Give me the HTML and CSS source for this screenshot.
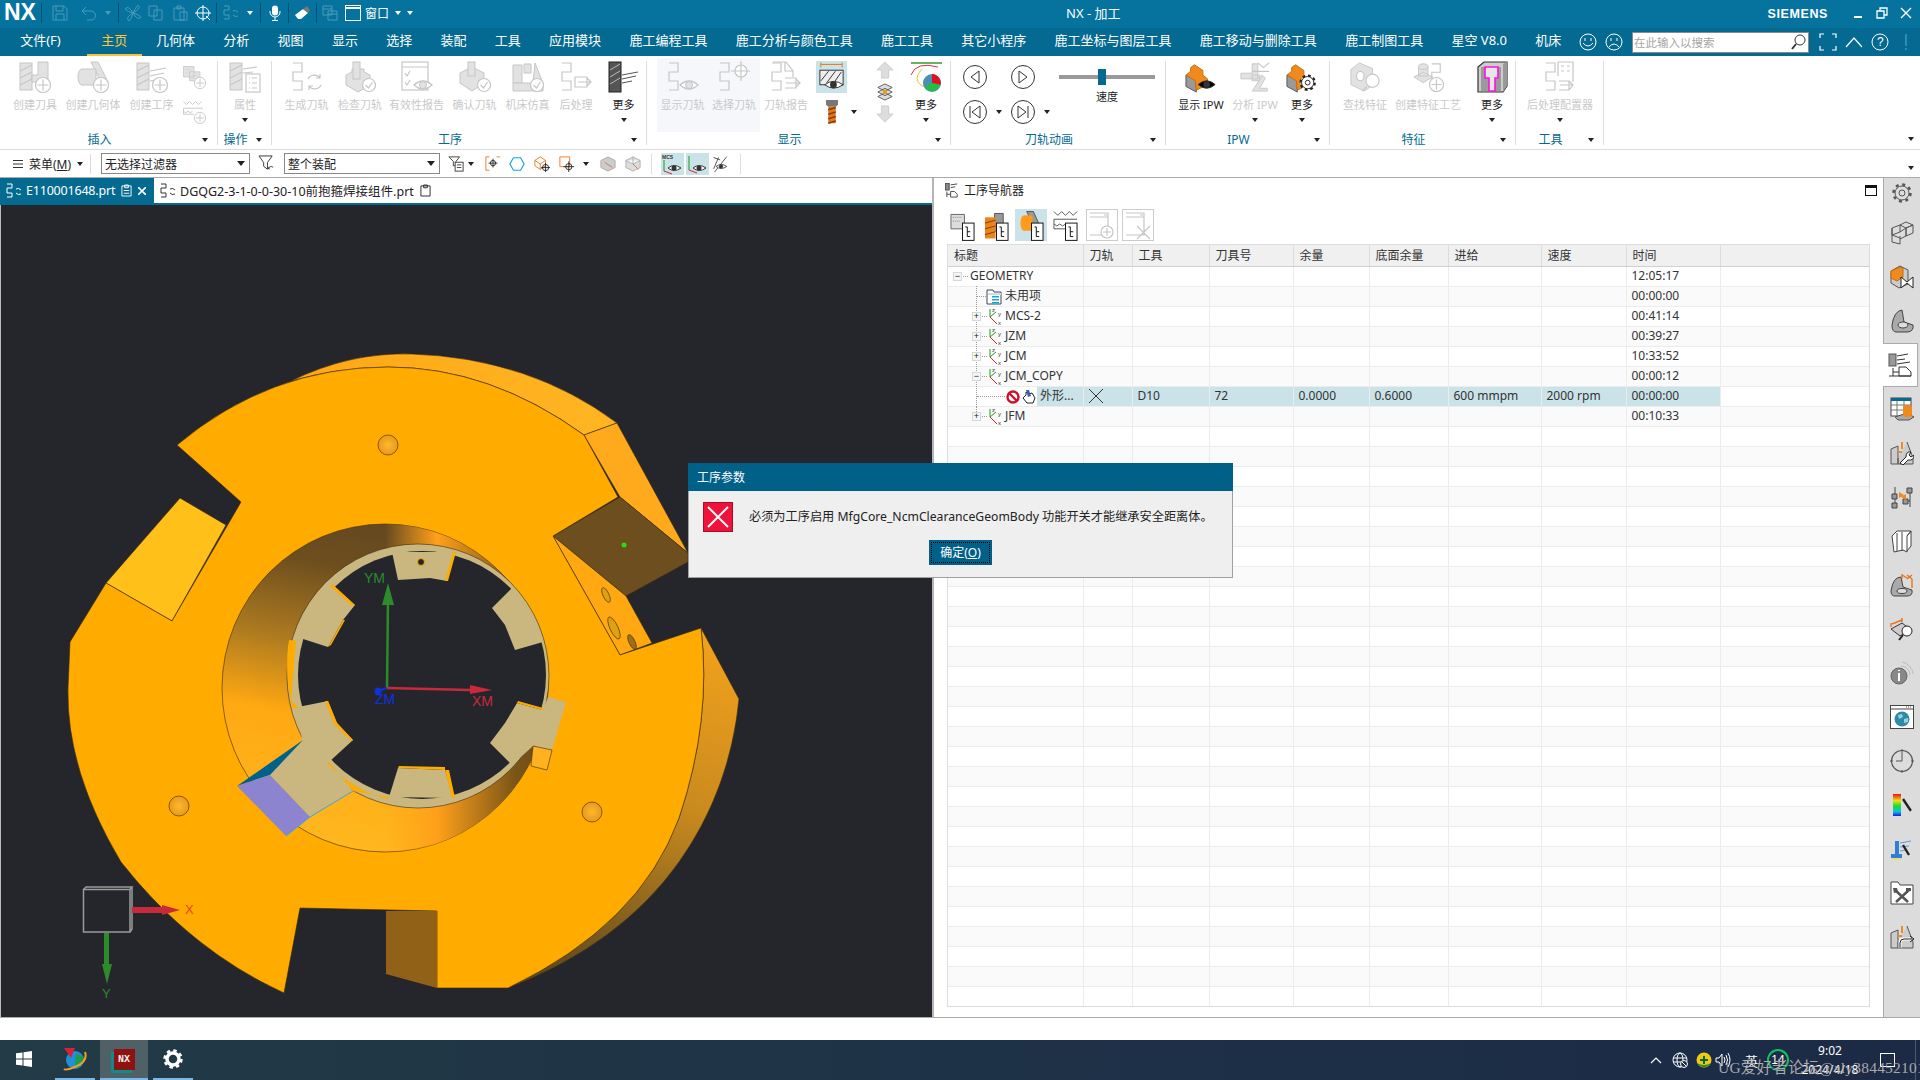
FILE: index.html
```html
<!DOCTYPE html>
<html lang="zh-CN">
<head>
<meta charset="utf-8">
<title>NX - 加工</title>
<link rel="stylesheet" href="styles.css">
</head>
<body>
<svg class="sprite" width="0" height="0" aria-hidden="true">
<defs>
<g id="pl"><circle class="gw" cx="24" cy="24" r="7.5"/><path class="gs" d="M24 18.5v11M18.5 24h11"/></g>
<g id="ck"><circle class="gw" cx="25" cy="24" r="6.5"/><path class="gs" d="M21.5 24l3 3 4-6"/></g>
<g id="ey"><path class="gw" d="M13 24q9-8 18 0q-9 8-18 0z"/><circle class="gf" cx="22" cy="24" r="3.5"/></g>
<g id="dey"><path class="dw" d="M12 24q9-8 18 0q-9 8-18 0z"/><circle fill="#333" cx="21" cy="24" r="3.5"/></g>
<path id="zz" d="M2 2h9v9H2v9h9v9H2" fill="none"/>
<g id="mill"><rect class="gf" x="1" y="2" width="12" height="27"/><path class="gs" d="M1 10l12-6M1 17l12-6M1 24l12-6"/></g>
<symbol id="a-tool" viewBox="0 0 32 32"><use href="#mill"/><path class="gf" d="M13 14h6V1h10v20H13z"/><use href="#pl"/></symbol>
<symbol id="a-geo" viewBox="0 0 32 32"><path class="gf" d="M14 1h7l10 20H24z"/><ellipse class="gf" cx="5" cy="16" rx="4" ry="8"/><path class="gf" d="M5 8h14v16H5"/><use href="#pl"/></symbol>
<symbol id="a-op" viewBox="0 0 32 32"><use href="#mill"/><path class="gs" d="M14 10l16-3M14 15l14-3M14 20l10-2"/><use href="#pl"/></symbol>
<symbol id="a-s1" viewBox="0 0 32 32"><path class="gf" d="M2 2h14v14H2zM10 9h14v12H10z"/><path class="gs" stroke-dasharray="1 2" d="M5 6h8M5 10h3M13 14h8M13 18h5"/><use href="#pl"/></symbol>
<symbol id="a-s2" viewBox="0 0 32 32"><path class="gs" d="M2 2l4 4 4-4 4 4 4-4 4 4 4-4M2 11h26M2 11v8M2 19h14"/><path class="gs" d="M2 15l3 2 3-2 3 2 3-2"/><use href="#pl"/></symbol>
<symbol id="a-attr" viewBox="0 0 32 32"><use href="#mill"/><path class="gs" d="M14 8l14-2M14 12l10-1"/><rect class="gw" x="17" y="13" width="14" height="18"/><path class="gs" d="M20 17h1M23 17h5M20 22h1M23 22h5M20 27h1M23 27h5"/></symbol>
<symbol id="a-gen" viewBox="0 0 32 32"><use href="#zz" class="gs"/><path class="gs" d="M17 18a7 7 0 0 1 12-1M30 24a7 7 0 0 1-12 1M29 13v4h-4M18 29v-4h4"/></symbol>
<symbol id="a-chk" viewBox="0 0 32 32"><path class="gf" d="M2 14l6-3v-3l12 0v3l6 3v10l-12 7-12-7z"/><rect class="gf" x="9" y="1" width="7" height="17"/><use href="#ck"/></symbol>
<symbol id="a-rep" viewBox="0 0 32 32"><rect class="gw" x="1" y="1" width="26" height="28"/><path class="gs" d="M1 6h26M4 12l2 3 3-5M4 21l2 3 3-5"/><use href="#ey"/></symbol>
<symbol id="a-cnf" viewBox="0 0 32 32"><path class="gf" d="M1 12l12-6 12 6v10l-12 8-12-8z"/><rect class="gf" x="9" y="1" width="7" height="14"/><use href="#ck"/></symbol>
<symbol id="a-mch" viewBox="0 0 32 32"><path class="gf" d="M1 4h9v18H1zM12 3h7v9h-7zM23 2l8 20H21z"/><path class="gf" d="M1 22h30v8H1z"/><use href="#ck"/></symbol>
<symbol id="a-post" viewBox="0 0 32 32"><use href="#zz" class="gs"/><path class="gs" d="M15 16h12v10H15zM18 21h13M27 17l4 4-4 4"/></symbol>
<symbol id="a-more" viewBox="0 0 32 32"><rect fill="#555" x="1" y="1" width="12" height="30" stroke="#222"/><path stroke="#bbb" fill="none" d="M2 9l10-6M2 16l10-6M2 23l10-6"/><path fill="none" stroke="#555" d="M14 14l16-3M14 18l14-3M14 22l10-2"/></symbol>
<symbol id="a-show" viewBox="0 0 32 32"><use href="#zz" class="gs"/><use href="#ey"/></symbol>
<symbol id="a-sel" viewBox="0 0 32 32"><use href="#zz" class="gs"/><circle class="gw" cx="23" cy="10" r="6"/><path class="gs" d="M23 0v20M13 10h19"/></symbol>
<symbol id="a-prep" viewBox="0 0 32 32"><use href="#zz" class="gs"/><path class="gs" d="M3 1h13l7 9v6M15 1v9h8M15 17h11v10H15M16 22h14M26 18l4 4-4 4"/></symbol>
<symbol id="a-tog" viewBox="0 0 32 32"><path fill="none" stroke="#e8731a" d="M5 3h22M5 1v5M27 1v5"/><rect x="4" y="9" width="24" height="15" fill="#eee" stroke="#333"/><path stroke="#333" d="M5 20l8-10M11 22l9-12M17 24l9-13"/><path fill="#fff" stroke="#333" d="M9 24q9-7 19 0q-10 7-19 0z"/><circle fill="#333" cx="18" cy="24" r="3.5"/></symbol>
<symbol id="a-mil2" viewBox="0 0 32 32"><path fill="#777" d="M8 0h16v6l-3 3H11L8 6z"/><rect x="11" y="9" width="10" height="22" fill="#e0771c"/><path stroke="#8a3c05" stroke-width="2" d="M11 13l10-3M11 19l10-3M11 25l10-3M11 31l10-3"/></symbol>
<symbol id="a-up" viewBox="0 0 20 20"><path fill="#ddd" stroke="#ccc" d="M10 1l9 9h-5v9H6v-9H1z"/></symbol>
<symbol id="a-dn" viewBox="0 0 20 20"><path fill="#ddd" stroke="#ccc" d="M10 19l9-9h-5V1H6v9H1z"/></symbol>
<symbol id="a-lay" viewBox="0 0 20 20"><path fill="#ddd" stroke="#555" d="M2 5l8-4 8 4-8 4zM2 10l8-4 8 4-8 4zM2 15l8-4 8 4-8 4z"/><circle cx="10" cy="10" r="2.5" fill="#e8a21a"/></symbol>
<symbol id="a-pie" viewBox="0 0 32 32"><path stroke="#1a9a1a" stroke-width="1.4" d="M1 2h31"/><path fill="none" stroke="#e03040" d="M1 14q5-14 27-8"/><path fill="none" stroke="#f0c020" d="M12 8q-10 10 0 17h7"/><circle cx="22" cy="22" r="9" fill="#4a90b0"/><path fill="#e01020" d="M22 22V13a9 9 0 0 1 8.500 11z"/><path fill="#20c040" d="M22 22l8.500 2a9 9 0 0 1-16 2z"/></symbol>
<symbol id="a-prev" viewBox="0 0 24 24"><ellipse cx="12" cy="12" rx="11.500" ry="11.500" fill="none" stroke="#333"/><path fill="none" stroke="#333" d="M16 6v12l-8-6z"/></symbol>
<symbol id="a-next" viewBox="0 0 24 24"><ellipse cx="12" cy="12" rx="11.500" ry="11.500" fill="none" stroke="#333"/><path fill="none" stroke="#333" d="M8 6v12l8-6z"/></symbol>
<symbol id="a-first" viewBox="0 0 24 24"><ellipse cx="12" cy="12" rx="11.500" ry="11.500" fill="none" stroke="#333"/><path fill="none" stroke="#333" d="M17 6v12l-8-6zM7 6v12"/></symbol>
<symbol id="a-last" viewBox="0 0 24 24"><ellipse cx="12" cy="12" rx="11.500" ry="11.500" fill="none" stroke="#333"/><path fill="none" stroke="#333" d="M7 6v12l8-6zM17 6v12"/></symbol>
<g id="stairs"><path fill="#9a9a9a" stroke="#555" d="M1 14v12l11 6V18z"/><path fill="#f08a1d" stroke="#c66a10" d="M1 14l5-4V6l4-3 9 6v5l5 4v6l-12 6-1-10z"/></g>
<symbol id="a-ipw" viewBox="0 0 34 32"><use href="#stairs"/><use href="#dey" x="2"/></symbol>
<symbol id="a-ana" viewBox="0 0 34 32"><path class="gf" d="M2 12h12V2h6v16H2zM14 14h8v6H14z"/><path class="gs" d="M20 1l6 5 6-5M14 10h18"/><path class="gf" d="M24 14l4 3-6 11h8v3H14l8-12z"/></symbol>
<symbol id="a-igr" viewBox="0 0 34 32"><use href="#stairs"/><circle cx="23" cy="22" r="7.500" fill="#fff" stroke="#222" stroke-width="2.500" stroke-dasharray="3 2.900"/><circle cx="23" cy="22" r="6.500" fill="#fff" stroke="#222"/><circle cx="23" cy="22" r="2.500" fill="#fff" stroke="#222"/></symbol>
<symbol id="a-find" viewBox="0 0 34 32"><path class="gf" d="M2 8l9-7 14 6v18l-9 6-14-7z"/><ellipse class="gw" cx="12" cy="15" rx="4" ry="5"/><circle class="gw" cx="25" cy="20" r="7"/><path class="gs" d="M19 26l-5 5" stroke-width="2"/></symbol>
<symbol id="a-cft" viewBox="0 0 34 32"><path class="gf" d="M2 16l10-5 10 5-10 6zM7 5h10v10H7z"/><ellipse class="gf" cx="12" cy="5" rx="5" ry="3"/><use href="#zz" class="gs" x="19"/><use href="#pl" x="2"/></symbol>
<symbol id="a-mag" viewBox="0 0 32 32"><path fill="#ccc" stroke="#333" stroke-width="1.200" d="M2 6l6-5h23v24l-4 6H2z"/><path fill="#999" d="M27 3l4-2v24l-4 6z"/><rect x="5" y="6" width="20" height="24" fill="#9a9a9a"/><path fill="#e6e6e6" stroke="#ff10e0" stroke-width="1.600" d="M9 6h13v11h-3v13h-6V17H9z"/></symbol>
<symbol id="a-cfg" viewBox="0 0 32 32"><use href="#zz" class="gs"/><path class="gs" d="M14 1h15v20M14 1v14M17 5h3M23 5h3M17 10h3M23 10h3M15 20h10v9H15M16 24h13M25 20l4 4-4 5"/></symbol>
<symbol id="q-save" viewBox="0 0 16 16"><path class="qs" d="M1 1h11l3 3v11H1zM4 1v5h7V1M4 15V9h8v6"/></symbol>
<symbol id="q-undo" viewBox="0 0 16 16"><path class="qs" d="M5 2L1 6l4 4M1 6h9a4 4 0 0 1 0 9H6"/></symbol>
<symbol id="q-fan" viewBox="0 0 16 16"><path class="qs" d="M8 8Q4 1 1 3t7 5zM8 8q7-4 6-7T8 8zM8 8q4 7 7 5T8 8zM8 8Q1 12 3 15t5-7z"/></symbol>
<symbol id="q-copy" viewBox="0 0 16 16"><path class="qs" d="M1 1h8v10H1zM6 5h8v10H6z"/></symbol>
<symbol id="q-paste" viewBox="0 0 16 16"><path class="qs" d="M2 3h10v12H2zM5 1h4v3H5zM8 7h7v8H8z"/></symbol>
<symbol id="q-tgt" viewBox="0 0 16 16"><circle cx="8" cy="8" r="6" fill="none" stroke="#fff"/><path fill="none" stroke="#fff" d="M8 0v16M0 8h16M11 11l4 4"/></symbol>
<symbol id="q-zz" viewBox="0 0 16 16"><path class="qs" d="M1 1h5v4H1v5h5v4H1M10 6a4 4 0 0 1 5 1M15 11a4 4 0 0 1-5-1"/></symbol>
<symbol id="q-mic" viewBox="0 0 16 16"><rect x="5" y="0.500" width="6" height="10" rx="3" fill="#fff"/><path fill="none" stroke="#fff" d="M3 6v1a5 5 0 0 0 10 0V6M8 12v3M5 15.500h6"/></symbol>
<symbol id="q-era" viewBox="0 0 16 16"><path fill="#fff" d="M1 10l8-6 5 4-7 6H4z"/><path fill="#777" d="M9 4l4-3 3 4-2 3z"/></symbol>
<symbol id="q-win2" viewBox="0 0 16 16"><path class="qs" d="M1 1h9v9H1zM1 4h9M6 6h9v9H6zM6 9h9"/></symbol>
<symbol id="q-win" viewBox="0 0 16 16"><rect x="0.500" y="0.500" width="15" height="15" fill="none" stroke="#fff"/><path stroke="#fff" stroke-width="2" d="M0 3h16"/></symbol>
<symbol id="t-filt" viewBox="0 0 18 18"><path fill="#fff" stroke="#333" d="M1 1h14l-5 7v7l-4-3V8z"/><path fill="none" stroke="#333" d="M11 15a3 3 0 0 1 5-2M12 15l-1-2"/></symbol>
<symbol id="t-fl2" viewBox="0 0 18 18"><path fill="#fff" stroke="#333" d="M1 1h12l-4 5v5H6V6z"/><rect x="8" y="7" width="9" height="10" fill="#fff" stroke="#333"/><path stroke="#333" d="M10 10h5M10 13h5"/></symbol>
<symbol id="t-sel" viewBox="0 0 18 18"><path fill="none" stroke="#e8731a" d="M5 1H1v15h4M13 1h4"/><circle cx="9" cy="8" r="3" fill="none" stroke="#222"/><path stroke="#222" d="M9 3v10M4 8h10"/></symbol>
<symbol id="t-hex" viewBox="0 0 18 18"><path fill="none" stroke="#12a5d8" stroke-width="1.300" d="M5 2h8l4 7-4 7H5L1 9z"/></symbol>
<symbol id="t-cube" viewBox="0 0 18 18"><path fill="none" stroke="#e8731a" d="M1 5l6-4 6 4v6l-6 4-6-4zM1 5l6 4 6-4M7 9v6"/><circle cx="13" cy="13" r="3.500" fill="none" stroke="#222"/><path stroke="#222" d="M13 8v10M8 13h10"/></symbol>
<symbol id="t-box" viewBox="0 0 18 18"><path fill="none" stroke="#e8731a" d="M1 1h11v11H1z"/><circle cx="11" cy="12" r="3.500" fill="none" stroke="#222"/><path stroke="#222" d="M11 6v12M5 12h12"/></symbol>
<symbol id="t-gc1" viewBox="0 0 18 18"><path fill="#ccc" stroke="#aaa" d="M1 5l8-4 8 4v8l-8 4-8-4z"/><path stroke="#c9764a" d="M5 7l9 6"/></symbol>
<symbol id="t-gc2" viewBox="0 0 18 18"><path fill="#ddd" stroke="#aaa" d="M1 5l8-4 8 4v8l-8 4-8-4zM9 9V1M1 5l8 4 8-4"/><path stroke="#c9764a" d="M9 9l6 6"/></symbol>
<symbol id="t-mcs" viewBox="0 0 22 22"><text x="1" y="6" class="micro">MCS</text><path fill="none" stroke="#1a9a1a" d="M3 7v11"/><path fill="none" stroke="#e02030" d="M3 18l8 3"/><path fill="#fff" stroke="#333" d="M7 15q6-5 13 0q-7 5-13 0z"/><circle cx="13" cy="15" r="2.500" fill="#333"/></symbol>
<symbol id="t-axe" viewBox="0 0 22 22"><path fill="none" stroke="#1a9a1a" d="M3 3v14"/><path fill="none" stroke="#e02030" d="M3 17l8 3"/><path fill="#fff" stroke="#333" d="M7 15q6-5 13 0q-7 5-13 0z"/><circle cx="13" cy="15" r="2.500" fill="#333"/></symbol>
<symbol id="t-noe" viewBox="0 0 22 22"><path fill="none" stroke="#333" d="M2 17L8 3M2 3l8 3M18 2L3 21"/><path fill="#fff" stroke="#333" d="M5 14q6-5 13 0q-7 5-13 0z"/><circle cx="11" cy="14" r="2.500" fill="#333"/></symbol>
<symbol id="n-nav" viewBox="0 0 16 16"><rect x="0.500" y="0.500" width="4" height="7" fill="#888" stroke="#555"/><path fill="none" stroke="#444" d="M6 2l7-1M6 5l5-1M2 9v6M2 12h4M6 9h4l3 3v3H6z"/></symbol>
<g id="tree"><rect x="13" y="14" width="12" height="18" fill="#fff" stroke="#111"/><path stroke="#111" d="M16 18h2M18 18v10M18 23h3M18 28h3"/></g>
<symbol id="n-1" viewBox="0 0 26 32"><path fill="#ddd" stroke="#666" d="M1 5h14v15H1z"/><path fill="none" stroke="#888" stroke-dasharray="1 1" d="M3 8h10M3 12h8"/><use href="#tree"/></symbol>
<symbol id="n-2" viewBox="0 0 26 32"><path fill="#999" stroke="#555" d="M11 4h9v18h-9z"/><rect x="1" y="8" width="11" height="22" fill="#e8851c"/><path stroke="#8a3c05" d="M1 14l11-3M1 20l11-3M1 26l11-3"/><use href="#tree"/></symbol>
<symbol id="n-3" viewBox="0 0 26 32"><path fill="#999" stroke="#555" d="M8 2h7l8 18H17z"/><ellipse cx="5" cy="14" rx="3.500" ry="8" fill="#ff9a1a"/><rect x="5" y="6" width="9" height="16" fill="#ff9a1a"/><use href="#tree"/></symbol>
<symbol id="n-4" viewBox="0 0 26 32"><path fill="none" stroke="#555" d="M1 2l4 4 4-4 4 4 4-4 4 4 4-4M1 10h24M1 10v10M1 20h12M1 15l3 2 3-2 3 2 3-2"/><use href="#tree"/></symbol>
<symbol id="n-5" viewBox="0 0 32 32"><rect x="0.500" y="0.500" width="31" height="31" fill="#fff" stroke="#ccc"/><path class="gs" d="M4 4h18v22H4M4 8h18M18 6h3"/><circle class="gw" cx="21" cy="23" r="6"/><path class="gs" d="M21 19v8M17 23h8"/></symbol>
<symbol id="n-6" viewBox="0 0 32 32"><rect x="0.500" y="0.500" width="31" height="31" fill="#fff" stroke="#ccc"/><path class="gs" d="M4 4h18v22H4M4 8h18M18 6h3M15 17l13 13M28 17L15 30"/></symbol>
<symbol id="r-gear" viewBox="0 0 24 24"><circle cx="12" cy="12" r="8.500" fill="none" stroke="#555" stroke-width="2.500" stroke-dasharray="3 3.670"/><circle cx="12" cy="12" r="7" fill="none" stroke="#555"/><circle cx="12" cy="12" r="3" fill="none" stroke="#555"/></symbol>
<symbol id="r-cube" viewBox="0 0 24 24"><path fill="#ddd" stroke="#555" d="M2 7l8-3v7l-8 3zM10 4l6-3 7 3-7 3zM16 7l7-3v8l-7 3zM2 7l0 14 8 2V15M10 11l6-4v8l-6 3M2 14l8 3"/></symbol>
<symbol id="r-ocube" viewBox="0 0 24 24"><path fill="#ccc" stroke="#555" d="M1 6l9-5 8 4v14l-9 4-8-5z"/><path fill="#f08a1d" stroke="#c66a10" d="M1 6l9-4 3 1v9l-6 4-6-3z"/><path fill="#fff" stroke="#222" d="M11 12l6 5 6-5v11l-6-5-6 5z"/></symbol>
<symbol id="r-part" viewBox="0 0 24 24"><path fill="#aaa" stroke="#444" d="M2 16q2-14 10-15l2 12 9 3q1 6-5 7H6q-4 0-4-7z"/><ellipse cx="13" cy="16" rx="5" ry="3" fill="#ddd" stroke="#444"/></symbol>
<symbol id="r-nav" viewBox="0 0 24 24"><rect x="1" y="1" width="7" height="12" fill="#999" stroke="#555"/><path fill="none" stroke="#333" d="M9 3l11-2M9 7l8-1M9 11l13-2M5 15v8M5 19h6M11 14h7l5 5v4H11zM1 23h22"/></symbol>
<symbol id="r-tbl" viewBox="0 0 24 24"><rect x="1" y="1" width="20" height="18" fill="#fff" stroke="#444"/><rect x="1" y="1" width="20" height="3" fill="#046a90"/><path stroke="#777" d="M1 8h20M1 13h20M7 4v15M14 4v15"/><path fill="#aaa" stroke="#555" d="M5 20l12-4 7 4-5 3H8z"/><rect x="13" y="8" width="9" height="12" rx="3" fill="#f08a1d"/></symbol>
<symbol id="r-mtl" viewBox="0 0 24 24"><path fill="#ccc" stroke="#555" d="M1 8l7-3v18H1zM17 1l6 16v6H8v-6"/><path stroke="#f08a1d" stroke-width="2" fill="none" d="M12 1v7M8 11h4"/><path fill="#fff" stroke="#222" d="M10 22l6-6q0-6 5-5l-2 3 2 2 3-2q0 6-6 5l-5 5z"/></symbol>
<symbol id="r-flow" viewBox="0 0 24 24"><path fill="#999" stroke="#444" d="M2 9h5v5H2zM2 18h5v5H2zM17 3h5v5h-5zM13 14h5v5h-5z"/><path fill="none" stroke="#444" d="M5 2v7M5 14v4M20 8v14M20 16h-2"/><path fill="#f08a1d" d="M9 7l5 3-5 3zM16 9v6l-5-3z"/></symbol>
<symbol id="r-book" viewBox="0 0 24 24"><path fill="#fff" stroke="#444" d="M2 7l5-5h14l-4 5v16l-4-2-9 2zM7 4v18M12 3v19M17 7l4-5v15l-4 5"/></symbol>
<symbol id="r-oprt" viewBox="0 0 24 24"><path fill="#aaa" stroke="#444" d="M1 18q2-14 10-14l2 10 9 3q1 6-5 6H5q-4 0-4-5z"/><ellipse cx="12" cy="18" rx="5" ry="2.500" fill="#ddd" stroke="#444"/><path fill="none" stroke="#e8731a" stroke-width="1.400" d="M12 6V1M12 2l5 3M17 2l5 4M22 2l-5 4M22 6v9"/></symbol>
<symbol id="r-mea" viewBox="0 0 24 24"><path fill="#ccc" stroke="#333" d="M1 12l11-6 8 6-10 7z"/><path fill="none" stroke="#e8731a" stroke-width="1.400" d="M1 6v4M2 7l10-4M12 1v4"/><circle cx="17" cy="14" r="5" fill="#fff" stroke="#222"/><path stroke="#222" stroke-width="2" d="M13 18l-4 5"/></symbol>
<symbol id="r-info" viewBox="0 0 24 24"><circle cx="9" cy="15" r="8" fill="#888" stroke="#666"/><path stroke="#fff" stroke-width="2" d="M9 12v8M9 9v1"/><path fill="none" stroke="#bbb" d="M11 5a9 9 0 0 1 9 9M12 1a13 13 0 0 1 11 12"/></symbol>
<symbol id="r-web" viewBox="0 0 24 24"><rect x="0.500" y="0.500" width="23" height="23" fill="#fff" stroke="#444"/><path stroke="#444" d="M1 4h22M16 2h1M18 2h1M20 2h1"/><circle cx="12" cy="14" r="7.500" fill="#2d8aa8"/><path fill="#9fd0de" d="M8 10l4-1 1 3-4 2zM14 14l4-1v4l-4 1z"/></symbol>
<symbol id="r-clk" viewBox="0 0 24 24"><circle cx="12" cy="12" r="10.500" fill="none" stroke="#555" stroke-width="1.200"/><path fill="none" stroke="#555" d="M12 0v3M12 21v3M0 12h3M21 12h3M12 3v9H6"/></symbol>
<symbol id="r-rbw" viewBox="0 0 24 24"><defs><linearGradient id="rb" x1="0" y1="0" x2="0" y2="1"><stop offset="0" stop-color="#f01010"/><stop offset=".3" stop-color="#f0e010"/><stop offset=".55" stop-color="#10e030"/><stop offset=".8" stop-color="#10c0e0"/><stop offset="1" stop-color="#1020e0"/></linearGradient></defs><rect x="3" y="1" width="8" height="22" fill="url(#rb)"/><path stroke="#222" stroke-width="2.400" d="M13 6l8 12"/><path stroke="#ddd" stroke-width="2" d="M21 18l2 2"/></symbol>
<symbol id="r-wnd" viewBox="0 0 24 24"><path fill="#2f7fd8" d="M5 4h4v14H5zM1 17h11v4H1z"/><path fill="none" stroke="#5a9be0" d="M10 6l11-2M10 10l9-1M10 14l6-1"/><path stroke="#222" stroke-width="2.400" d="M13 8l6 10"/><path stroke="#f0e010" d="M2 22h9"/></symbol>
<symbol id="r-tls" viewBox="0 0 24 24"><path fill="#fff" stroke="#444" d="M1 5V1h7l2 3h13v19H1z"/><path stroke="#555" stroke-width="2.500" d="M5 9l13 12M19 9L6 21"/><path fill="#555" d="M3 7l4 0 1 4-4 1zM16 7h5v3h-5z"/></symbol>
<symbol id="r-mta" viewBox="0 0 24 24"><path fill="#ccc" stroke="#555" d="M1 8l7-3v18H1zM17 1l6 16v6H8v-6"/><path stroke="#f08a1d" stroke-width="2" fill="none" d="M12 1v7M8 11h4"/><path fill="none" stroke="#fff" stroke-width="3" d="M10 23v-5q0-4 4-4h7"/><path fill="none" stroke="#222" d="M10 23v-5q0-4 4-4h7M20 11l4 3-4 3"/></symbol>
<symbol id="x-fold" viewBox="0 0 16 16"><path fill="#fff" stroke="#445" d="M1 1h6l1 2h7v12H1z"/><path fill="#c8dde6" d="M2 4h13v2H2z"/><path fill="#12a5d8" d="M6 7h7v1.500H6zM6 10h7v1.500H6zM6 13h7v1.500H6z"/></symbol>
<symbol id="x-mcs" viewBox="0 0 16 17"><path fill="none" stroke="#1a9a1a" d="M2 9V1M2 9l6-5"/><path fill="none" stroke="#e02030" d="M2 9l7 7"/><text x="4" y="4" class="nano">z</text><text x="10" y="8" class="nano">y</text><text x="10" y="17" class="nano">x</text></symbol>
<symbol id="x-no" viewBox="0 0 14 14"><circle cx="7" cy="7" r="5.500" fill="#fff" stroke="#d0102a" stroke-width="2.400"/><path stroke="#d0102a" stroke-width="2.400" d="M3.500 3.500l7 7"/></symbol>
<symbol id="x-hand" viewBox="0 0 16 16"><path fill="#fff" stroke="#222" d="M2 9l3-3V3l3 2 3-1 3 5-2 5H6z"/><path fill="#3c5fb0" d="M5 1l3 0 2 6-3 1z"/></symbol>
<symbol id="z-win" viewBox="0 0 16 16"><path fill="#fff" d="M0 2.300L6.500 1.400v6.100H0zM7.500 1.300L16 0v7.500H7.500zM0 8.500h6.500v6.100L0 13.700zM7.500 8.500H16V16l-8.500-1.300z"/></symbol>
<symbol id="z-web" viewBox="0 0 24 24"><circle cx="12" cy="13" r="9" fill="#1f8fd8"/><path fill="#1f9a4a" d="M13 7l7 2 1 6-6 6-3-4z"/><path fill="#d8203a" d="M1 1h11l-4 10z"/><path fill="none" stroke="#f0a020" stroke-width="2" d="M22 5q3 9-8 14T1 22"/></symbol>
<symbol id="z-gear" viewBox="0 0 20 20"><circle cx="10" cy="10" r="6" fill="none" stroke="#fff" stroke-width="3.500"/><circle cx="10" cy="10" r="8.300" fill="none" stroke="#fff" stroke-width="2.800" stroke-dasharray="3.400 3.120"/></symbol>
<symbol id="z-net" viewBox="0 0 16 16"><circle cx="8" cy="8" r="7" fill="none" stroke="#fff"/><ellipse cx="8" cy="8" rx="3" ry="7" fill="none" stroke="#fff"/><path stroke="#fff" d="M1 6h14M1 10h14"/><circle cx="12" cy="12" r="3.500" fill="#1c2a46" stroke="#fff"/><path stroke="#fff" d="M10 10l4 4"/></symbol>
<symbol id="z-360" viewBox="0 0 16 16"><circle cx="8" cy="8" r="7.500" fill="#f0c818"/><path fill="#2e8a2a" d="M1 11a8 8 0 0 0 14 0q-7 4-14 0z"/><path stroke="#0a6a1a" stroke-width="2" d="M8 4v8M4 8h8"/></symbol>
<symbol id="z-vol" viewBox="0 0 16 16"><path fill="none" stroke="#fff" d="M1 6h3l3-4v12l-3-4H1zM9 5q2 3 0 6M11 3q3 5 0 10M13 1q4 7 0 14"/></symbol>
</defs>
</svg>

<div class="app">
  <header class="titlebar">
    <div class="quick">
      <b class="nx">NX</b><i class="vsep m5"></i>
      <svg class="q16 m10 dim"><use href="#q-save"/></svg>
      <svg class="q16 m13 dim"><use href="#q-undo"/></svg><i class="caret light m8 dim"></i><i class="vsep m7"></i>
      <svg class="q16 m6 dim"><use href="#q-fan"/></svg>
      <svg class="q16 m7 dim"><use href="#q-copy"/></svg>
      <svg class="q16 m8 dim"><use href="#q-paste"/></svg>
      <svg class="q16 m7"><use href="#q-tgt"/></svg><i class="vsep m5"></i>
      <svg class="q16 m6 dim"><use href="#q-zz"/></svg><i class="caret light m8"></i><i class="vsep m7"></i>
      <svg class="q16 m6"><use href="#q-mic"/></svg><i class="vsep m5"></i>
      <svg class="q16 m5"><use href="#q-era"/></svg><i class="vsep m6"></i>
      <svg class="q16 m5 dim"><use href="#q-win2"/></svg>
      <svg class="q16 m7"><use href="#q-win"/></svg><span class="qtext m4">窗口</span><i class="caret light m6"></i><i class="caret light m6"></i>
    </div>
    <div class="apptitle">NX - 加工</div>
    <div class="siemens">SIEMENS</div>
    <div class="winbtns">
      <i class="w-min"></i>
      <svg class="w-res" viewBox="0 0 12 12"><path fill="none" stroke="#fff" stroke-width="1.300" d="M1 4h7v7H1zM4 4V1h7v7H8"/></svg>
      <svg class="w-cls" viewBox="0 0 12 12"><path stroke="#fff" stroke-width="1.400" d="M1 1l10 10M11 1L1 11"/></svg>
    </div>
  </header>

  <nav class="menubar">
    <span class="mi first">文件(F)</span>
    <span class="mi on">主页</span>
    <span class="mi">几何体</span>
    <span class="mi">分析</span>
    <span class="mi">视图</span>
    <span class="mi">显示</span>
    <span class="mi">选择</span>
    <span class="mi">装配</span>
    <span class="mi">工具</span>
    <span class="mi">应用模块</span>
    <span class="mi">鹿工编程工具</span>
    <span class="mi">鹿工分析与颜色工具</span>
    <span class="mi">鹿工工具</span>
    <span class="mi">其它小程序</span>
    <span class="mi">鹿工坐标与图层工具</span>
    <span class="mi">鹿工移动与删除工具</span>
    <span class="mi">鹿工制图工具</span>
    <span class="mi">星空 V8.0</span>
    <span class="mi">机床</span>
    <div class="menuright">
      <svg class="mfc" viewBox="0 0 18 18"><circle cx="9" cy="9" r="8" fill="none" stroke="#fff"/><path stroke="#fff" d="M6 5v3M12 5v3"/><path fill="none" stroke="#fff" d="M4 10q5 6 10 0"/></svg>
      <svg class="mfc m8" viewBox="0 0 18 18"><circle cx="9" cy="9" r="8" fill="none" stroke="#fff"/><path stroke="#fff" d="M6 5v3M12 5v3"/><path fill="none" stroke="#fff" d="M4 14q5-6 10 0"/></svg>
      <div class="search"><span>在此输入以搜索</span><svg class="mag" viewBox="0 0 16 16"><circle cx="10" cy="6" r="5" fill="#fff" stroke="#333"/><path stroke="#333" stroke-width="2" d="M6 10l-4 5"/></svg></div>
      <svg class="mfc m10" viewBox="0 0 18 18"><path fill="none" stroke="#fff" stroke-width="1.200" d="M1 5V1h4M13 1h4v4M17 13v4h-4M5 17H1v-4"/></svg>
      <svg class="mfc m8" viewBox="0 0 18 18"><path fill="none" stroke="#fff" stroke-width="1.200" d="M1 14L9 5l8 9"/></svg>
      <svg class="mfc m8" viewBox="0 0 18 18"><circle cx="9" cy="9" r="8" fill="none" stroke="#fff"/><text x="6" y="13" class="qm">?</text></svg>
      <svg class="mfc m8" viewBox="0 0 18 18"><path stroke="#3796b8" stroke-width="1.600" d="M9 1v12M9 15v2"/></svg>
    </div>
  </nav>

  <section class="ribbon">
    <div class="group gw218">
      <div class="tools pl6">
        <div class="btn w58"><svg class="ico"><use href="#a-tool"/></svg><span class="lb off">创建刀具</span></div>
        <div class="btn w58"><svg class="ico"><use href="#a-geo"/></svg><span class="lb off">创建几何体</span></div>
        <div class="btn w59"><svg class="ico"><use href="#a-op"/></svg><span class="lb off">创建工序</span></div>
        <div class="smallcol w26"><svg class="ico24"><use href="#a-s1"/></svg><svg class="ico24 mt11"><use href="#a-s2"/></svg></div>
      </div>
      <div class="glabel"><span>插入</span><i class="caret"></i></div>
    </div>
    <div class="group gw54">
      <div class="tools">
        <div class="btn w54"><svg class="ico"><use href="#a-attr"/></svg><span class="lb off">属性</span><i class="caret c-b"></i></div>
      </div>
      <div class="glabel"><span>操作</span><i class="caret"></i></div>
    </div>
    <div class="group gw375">
      <div class="tools pl8">
        <div class="btn w53"><svg class="ico"><use href="#a-gen"/></svg><span class="lb off">生成刀轨</span></div>
        <div class="btn w54"><svg class="ico"><use href="#a-chk"/></svg><span class="lb off">检查刀轨</span></div>
        <div class="btn w59"><svg class="ico"><use href="#a-rep"/></svg><span class="lb off">有效性报告</span></div>
        <div class="btn w57"><svg class="ico"><use href="#a-cnf"/></svg><span class="lb off">确认刀轨</span></div>
        <div class="btn w49"><svg class="ico"><use href="#a-mch"/></svg><span class="lb off">机床仿真</span></div>
        <div class="btn w48"><svg class="ico"><use href="#a-post"/></svg><span class="lb off">后处理</span></div>
        <div class="btn w47"><svg class="ico"><use href="#a-more"/></svg><span class="lb">更多</span><i class="caret c-b"></i></div>
      </div>
      <div class="glabel"><span>工序</span><i class="caret"></i></div>
    </div>
    <div class="group gw304">
      <div class="tools pl10">
        <div class="btn w51 hl"><svg class="ico"><use href="#a-show"/></svg><span class="lb off">显示刀轨</span></div>
        <div class="btn w52 hl"><svg class="ico"><use href="#a-sel"/></svg><span class="lb off">选择刀轨</span></div>
        <div class="btn w52"><svg class="ico"><use href="#a-prep"/></svg><span class="lb off">刀轨报告</span></div>
        <div class="togcol"><svg class="tog"><use href="#a-tog"/></svg><svg class="ico24 mt7"><use href="#a-mil2"/></svg></div>
        <div class="carcol"><i class="caret"></i></div>
        <div class="arrows"><svg class="ico18"><use href="#a-up"/></svg><svg class="ico18"><use href="#a-lay"/></svg><svg class="ico18"><use href="#a-dn"/></svg></div>
        <div class="btn w48 ml3"><svg class="ico"><use href="#a-pie"/></svg><span class="lb">更多</span><i class="caret c-b"></i></div>
      </div>
      <div class="glabel"><span>显示</span><i class="caret"></i></div>
    </div>
    <div class="group gw215">
      <div class="tools pl12">
        <div class="player">
          <svg class="cir"><use href="#a-prev"/></svg><span></span><svg class="cir"><use href="#a-next"/></svg><span></span>
          <svg class="cir"><use href="#a-first"/></svg><i class="caret"></i><svg class="cir"><use href="#a-last"/></svg><i class="caret"></i>
        </div>
        <div class="speed"><div class="track"><i class="thumb"></i></div><span class="lb">速度</span></div>
      </div>
      <div class="glabel"><span>刀轨动画</span><i class="caret"></i></div>
    </div>
    <div class="group gw164">
      <div class="tools pl8">
        <div class="btn w54"><svg class="ico"><use href="#a-ipw"/></svg><span class="lb">显示 IPW</span></div>
        <div class="btn w54"><svg class="ico"><use href="#a-ana"/></svg><span class="lb off">分析 IPW</span><i class="caret c-b"></i></div>
        <div class="btn w40"><svg class="ico"><use href="#a-igr"/></svg><span class="lb">更多</span><i class="caret c-b"></i></div>
      </div>
      <div class="glabel"><span>IPW</span><i class="caret"></i></div>
    </div>
    <div class="group gw186">
      <div class="tools pl4">
        <div class="btn w62"><svg class="ico"><use href="#a-find"/></svg><span class="lb off">查找特征</span></div>
        <div class="btn w64"><svg class="ico"><use href="#a-cft"/></svg><span class="lb off">创建特征工艺</span></div>
        <div class="btn w40 ml12"><svg class="ico"><use href="#a-mag"/></svg><span class="lb">更多</span><i class="caret c-b"></i></div>
      </div>
      <div class="glabel"><span>特征</span><i class="caret"></i></div>
    </div>
    <div class="group gw88">
      <div class="tools">
        <div class="btn w88"><svg class="ico"><use href="#a-cfg"/></svg><span class="lb off">后处理配置器</span><i class="caret c-b"></i></div>
      </div>
      <div class="glabel"><span>工具</span><i class="caret"></i></div>
    </div>
    <i class="caret ribcaret"></i>
  </section>

  <section class="selbar">
    <svg class="hamb" viewBox="0 0 10 10"><path stroke="#333" d="M0 1.500h10M0 5h10M0 8.500h10"/></svg>
    <span class="menu-m">菜单(<u>M</u>)</span><i class="caret m6"></i><i class="tsep m7"></i>
    <div class="combo c149 m10"><span>无选择过滤器</span><i class="caret cb"></i></div>
    <svg class="ti17 m8"><use href="#t-filt"/></svg>
    <div class="combo c156 m9"><span>整个装配</span><i class="caret cb"></i></div>
    <svg class="ti m8"><use href="#t-fl2"/></svg><i class="caret m4"></i>
    <svg class="ti m11"><use href="#t-sel"/></svg>
    <svg class="ti m8"><use href="#t-hex"/></svg>
    <svg class="ti m9"><use href="#t-cube"/></svg>
    <svg class="ti m9"><use href="#t-box"/></svg><i class="caret m8"></i>
    <svg class="ti m11"><use href="#t-gc1"/></svg>
    <svg class="ti m9"><use href="#t-gc2"/></svg>
    <i class="tsep m10"></i>
    <span class="tg m9"><svg class="ti22"><use href="#t-mcs"/></svg></span>
    <span class="tg m2"><svg class="ti22"><use href="#t-axe"/></svg></span>
    <svg class="ti18 m3"><use href="#t-noe"/></svg>
    <i class="tsep m10"></i>
    <i class="caret endcaret"></i>
  </section>

  <main class="workspace">
    <section class="leftpane">
      <div class="tabs">
        <div class="tab active">
          <svg class="tabico"><use href="#q-zz"/></svg><span class="tabname">E110001648.prt</span>
          <svg class="tablock" viewBox="0 0 12 14"><path fill="none" stroke="#fff" d="M1 2h10v11H1zM4 1h4v3H4z"/><path stroke="#fff" d="M3 7h6M3 10h6"/></svg>
          <svg class="tabx" viewBox="0 0 8 8"><path stroke="#fff" stroke-width="1.600" d="M0 0l8 8M8 0L0 8"/></svg>
        </div>
        <div class="tab">
          <svg class="tabico dark"><use href="#q-zz"/></svg><span class="tabname">DGQG2-3-1-0-0-30-10前抱箍焊接组件.prt</span>
          <svg class="tablock" viewBox="0 0 12 14"><path fill="none" stroke="#222" d="M1 2h10v11H1zM4 1h4v3H4z"/></svg>
        </div>
      </div>
      <div class="viewport">
        <svg class="scene" viewBox="1 205 931 812" xmlns="http://www.w3.org/2000/svg">
          <defs>
            <linearGradient id="rimR" x1="0.6" y1="0" x2="0.4" y2="1"><stop offset="0" stop-color="#efa01c"/><stop offset=".45" stop-color="#c98a1e"/><stop offset="1" stop-color="#5f4a1e"/></linearGradient>
            <linearGradient id="rec" x1="0.55" y1="0" x2="0.35" y2="1"><stop offset="0" stop-color="#634820"/><stop offset=".16" stop-color="#6d4e1e"/><stop offset=".4" stop-color="#ad7a20"/><stop offset=".62" stop-color="#ffa812"/><stop offset="1" stop-color="#ffb81f"/></linearGradient>
            <linearGradient id="rec2" x1="0" y1="0" x2="1" y2="0"><stop offset=".5" stop-color="#ffa51a" stop-opacity="0"/><stop offset=".66" stop-color="#ffa01a"/><stop offset=".9" stop-color="#7a5518"/><stop offset="1" stop-color="#6b4c1a"/></linearGradient>
            <linearGradient id="rimT" x1="0" y1="0" x2="1" y2="0"><stop offset="0" stop-color="#ffa716"/><stop offset="1" stop-color="#ffb522"/></linearGradient>
            <radialGradient id="hole"><stop offset="0" stop-color="#ffb830"/><stop offset="1" stop-color="#e89a18"/></radialGradient>
          </defs>
          <path fill="url(#rimT)" class="edge" d="M291 381Q350 352 412 354Q530 358 617 423L584 435Q490 367 388 367Q340 367 291 381z"/>
          <path fill="#ffaa1c" class="edge" d="M584 435L617 423L688 553L620 497z"/>
          <path fill="#6d4e1e" class="edge" d="M620 497L688 553L688 562L626 596L553 536z"/>
          <path fill="#ffa812" class="edge" d="M553 536L626 596L652 643L620 655z"/>
          <ellipse cx="606" cy="595" rx="3" ry="8" fill="#e0a010" class="edge" transform="rotate(-25 606 595)"/>
          <ellipse cx="614" cy="628" rx="4" ry="12" fill="#e0a010" class="edge" transform="rotate(-25 614 628)"/>
          <ellipse cx="632" cy="642" rx="3" ry="8" fill="#a07018" class="edge" transform="rotate(-25 632 642)"/>
          <circle cx="624" cy="545" r="2.500" fill="#22e010"/>
          <path fill="url(#rimR)" class="edge" d="M701 628L739 699Q730 790 679 862Q620 945 508 988Q640 925 679 818Q712 720 701 628z"/>
          <path fill="#ffc01a" class="edge" d="M180 498L226 525L172 621L106 583z"/>
          <path fill="#ffab00" class="edge" d="M177 445Q270 367 388 367Q490 367 584 435L618 497L553 536L620 655L701 628Q712 720 679 818Q640 925 508 988L437 988L437 911L300 908L284 993Q190 950 121 862Q66 770 68 688L70 642L106 583L172 621L241 502z"/>
          <path fill="#916118" d="M386 911L437 911L437 988L386 974z"/>
          <circle cx="388" cy="445" r="10" fill="url(#hole)" class="edge"/>
          <circle cx="179" cy="806" r="10" fill="url(#hole)" class="edge"/>
          <circle cx="592" cy="812" r="10" fill="url(#hole)" class="edge"/>
          <ellipse cx="385" cy="688" rx="163" ry="164" fill="url(#rec)" class="edge"/>
          <ellipse cx="385" cy="688" rx="163" ry="164" fill="url(#rec2)"/>
          <ellipse cx="418" cy="676" rx="131" ry="132" fill="#c9b77f" class="edge"/>
          <circle cx="422" cy="675" r="124" fill="#24262b"/>
          <path fill="#ffab00" d="M289 640L296 641L291 700L298 708L292 708Q284 670 289 640z"/>
          <path fill="#c9b77f" d="M392 552L455 552L447 581L430 578L398 580z"/>
          <path fill="#ffab00" d="M453 552L456 552L448 581L445 581z"/>
          <circle cx="421" cy="562" r="3.500" fill="#24262b" stroke="#ffab00"/>
          <path fill="#c9b77f" d="M332 584L355 605L343 620L328 647L300 638Q312 606 332 584z"/>
          <path fill="#ffab00" d="M332 584L355 605L352 606L330 586zM343 620L328 647L331 645L345 620z"/>
          <path fill="#c9b77f" d="M512 588L492 608L505 625L515 650L543 642Q532 610 512 588z"/>
          <path fill="#c9b77f" d="M302 740L270 775L310 817L353 791L329 762L353 740L337 723L328 701L298 707z"/>
          <path fill="#ffab00" d="M328 701L337 723L353 740L351 741L334 724L325 701zM329 762L353 791L389 797L388 799Q352 790 327 763z"/>
          <path fill="#c9b77f" d="M398 768L445 770L453 798L389 797z"/>
          <path fill="#ffab00" d="M445 770L449 770L455 798L452 798zM398 768L445 770L445 767L399 766z"/>
          <path fill="#c9b77f" d="M517 703L543 710L548 697L566 702L552 750L533 746L512 765L490 743L505 723z"/>
          <path fill="#ffab00" d="M517 703L543 710L543 708L518 701z"/>
          <path fill="#ffb21f" class="edge" d="M533 746L552 750L547 770L531 766z"/>
          <path fill="#00628a" d="M303 740L270 775L237 786z"/>
          <path fill="#8d84cf" d="M270 775L310 817L286 836L237 786z"/>
          <path fill="none" stroke="#3aa8e0" d="M310 817L353 791M286 836L310 817"/>
          <g class="axis">
            <path stroke="#2c8c2c" stroke-width="2.500" d="M387 688L388 600"/>
            <path fill="#2c8c2c" d="M388 583L394 605H382z"/>
            <path stroke="#c82a3a" stroke-width="2.500" d="M387 688L470 690"/>
            <path fill="#c82a3a" d="M492 690L470 685V694z"/>
            <circle cx="378" cy="691" r="3.500" fill="#1030e0"/>
            <path stroke="#1030e0" stroke-width="2" d="M378 691L387 688"/>
            <text x="364" y="583" class="ax ay">YM</text>
            <text x="375" y="704" class="ax az">ZM</text>
            <text x="472" y="706" class="ax ar">XM</text>
          </g>
          <g class="triad">
            <path fill="#24262b" stroke="#9a9a9a" stroke-width="1.500" d="M83.500 889.500H130V932H83.500zM130 889.500L132 887H86L83.500 889.500M130 932L132 929V887"/>
            <path fill="#c82a3a" d="M132 907H162V905L180 910L162 915V913H132z"/>
            <path fill="#2c8c2c" d="M104 933H109V964H112L107 984L102 964H104z"/>
            <text x="185" y="914" class="tx tr">X</text>
            <text x="102" y="998" class="tx tg2">Y</text>
          </g>
        </svg>
      </div>
    </section>

    <section class="nav">
      <div class="navtitle">
        <svg class="navico"><use href="#n-nav"/></svg><span>工序导航器</span>
        <i class="maxbox"></i>
      </div>
      <div class="navtools">
        <svg class="ni"><use href="#n-1"/></svg>
        <svg class="ni m9"><use href="#n-2"/></svg>
        <span class="ni-on m6"><svg class="ni"><use href="#n-3"/></svg></span>
        <svg class="ni m6"><use href="#n-4"/></svg>
        <svg class="ni32 m8"><use href="#n-5"/></svg>
        <svg class="ni32 m4"><use href="#n-6"/></svg>
      </div>
      <div class="tablewrap">
        <table class="optable">
          <colgroup><col class="c1"><col class="c2"><col class="c3"><col class="c4"><col class="c5"><col class="c6"><col class="c7"><col class="c8"><col class="c9"><col class="c10"></colgroup>
          <thead><tr><th>标题</th><th>刀轨</th><th>工具</th><th>刀具号</th><th>余量</th><th>底面余量</th><th>进给</th><th>速度</th><th>时间</th><th></th></tr></thead>
          <tbody>
            <tr><td class="tc"><span class="xp lv0">−</span><i class="dash"></i><span class="nm g">GEOMETRY</span></td><td></td><td></td><td></td><td></td><td></td><td></td><td></td><td>12:05:17</td><td></td></tr>
            <tr><td class="tc"><i class="vline"></i><i class="dash2"></i><svg class="ti-folder"><use href="#x-fold"/></svg><span class="nm">未用项</span></td><td></td><td></td><td></td><td></td><td></td><td></td><td></td><td>00:00:00</td><td></td></tr>
            <tr><td class="tc"><i class="vline"></i><span class="xp lv1">+</span><i class="dash"></i><svg class="ti-mcs"><use href="#x-mcs"/></svg><span class="nm">MCS-2</span></td><td></td><td></td><td></td><td></td><td></td><td></td><td></td><td>00:41:14</td><td></td></tr>
            <tr><td class="tc"><i class="vline"></i><span class="xp lv1">+</span><i class="dash"></i><svg class="ti-mcs"><use href="#x-mcs"/></svg><span class="nm">JZM</span></td><td></td><td></td><td></td><td></td><td></td><td></td><td></td><td>00:39:27</td><td></td></tr>
            <tr><td class="tc"><i class="vline"></i><span class="xp lv1">+</span><i class="dash"></i><svg class="ti-mcs"><use href="#x-mcs"/></svg><span class="nm">JCM</span></td><td></td><td></td><td></td><td></td><td></td><td></td><td></td><td>10:33:52</td><td></td></tr>
            <tr><td class="tc"><i class="vline"></i><span class="xp lv1">−</span><i class="dash"></i><svg class="ti-mcs"><use href="#x-mcs"/></svg><span class="nm">JCM_COPY</span></td><td></td><td></td><td></td><td></td><td></td><td></td><td></td><td>00:00:12</td><td></td></tr>
            <tr class="sel"><td class="tc"><i class="vline"></i><i class="dash3"></i><svg class="ti-no"><use href="#x-no"/></svg><svg class="ti-hand"><use href="#x-hand"/></svg><span class="nm hi">外形...</span></td><td><svg class="xmark" viewBox="0 0 14 14"><path stroke="#333" d="M0 0l14 14M14 0L0 14"/></svg></td><td>D10</td><td>72</td><td>0.0000</td><td>0.6000</td><td>600 mmpm</td><td>2000 rpm</td><td>00:00:00</td><td class="nosel"></td></tr>
            <tr><td class="tc"><i class="vline half"></i><span class="xp lv1">+</span><i class="dash"></i><svg class="ti-mcs"><use href="#x-mcs"/></svg><span class="nm">JFM</span></td><td></td><td></td><td></td><td></td><td></td><td></td><td></td><td>00:10:33</td><td></td></tr>
            <tr><td></td><td></td><td></td><td></td><td></td><td></td><td></td><td></td><td></td><td></td></tr>
            <tr><td></td><td></td><td></td><td></td><td></td><td></td><td></td><td></td><td></td><td></td></tr>
            <tr><td></td><td></td><td></td><td></td><td></td><td></td><td></td><td></td><td></td><td></td></tr>
            <tr><td></td><td></td><td></td><td></td><td></td><td></td><td></td><td></td><td></td><td></td></tr>
            <tr><td></td><td></td><td></td><td></td><td></td><td></td><td></td><td></td><td></td><td></td></tr>
            <tr><td></td><td></td><td></td><td></td><td></td><td></td><td></td><td></td><td></td><td></td></tr>
            <tr><td></td><td></td><td></td><td></td><td></td><td></td><td></td><td></td><td></td><td></td></tr>
            <tr><td></td><td></td><td></td><td></td><td></td><td></td><td></td><td></td><td></td><td></td></tr>
            <tr><td></td><td></td><td></td><td></td><td></td><td></td><td></td><td></td><td></td><td></td></tr>
            <tr><td></td><td></td><td></td><td></td><td></td><td></td><td></td><td></td><td></td><td></td></tr>
            <tr><td></td><td></td><td></td><td></td><td></td><td></td><td></td><td></td><td></td><td></td></tr>
            <tr><td></td><td></td><td></td><td></td><td></td><td></td><td></td><td></td><td></td><td></td></tr>
            <tr><td></td><td></td><td></td><td></td><td></td><td></td><td></td><td></td><td></td><td></td></tr>
            <tr><td></td><td></td><td></td><td></td><td></td><td></td><td></td><td></td><td></td><td></td></tr>
            <tr><td></td><td></td><td></td><td></td><td></td><td></td><td></td><td></td><td></td><td></td></tr>
            <tr><td></td><td></td><td></td><td></td><td></td><td></td><td></td><td></td><td></td><td></td></tr>
            <tr><td></td><td></td><td></td><td></td><td></td><td></td><td></td><td></td><td></td><td></td></tr>
            <tr><td></td><td></td><td></td><td></td><td></td><td></td><td></td><td></td><td></td><td></td></tr>
            <tr><td></td><td></td><td></td><td></td><td></td><td></td><td></td><td></td><td></td><td></td></tr>
            <tr><td></td><td></td><td></td><td></td><td></td><td></td><td></td><td></td><td></td><td></td></tr>
            <tr><td></td><td></td><td></td><td></td><td></td><td></td><td></td><td></td><td></td><td></td></tr>
            <tr><td></td><td></td><td></td><td></td><td></td><td></td><td></td><td></td><td></td><td></td></tr>
            <tr><td></td><td></td><td></td><td></td><td></td><td></td><td></td><td></td><td></td><td></td></tr>
            <tr><td></td><td></td><td></td><td></td><td></td><td></td><td></td><td></td><td></td><td></td></tr>
            <tr><td></td><td></td><td></td><td></td><td></td><td></td><td></td><td></td><td></td><td></td></tr>
            <tr><td></td><td></td><td></td><td></td><td></td><td></td><td></td><td></td><td></td><td></td></tr>
            <tr><td></td><td></td><td></td><td></td><td></td><td></td><td></td><td></td><td></td><td></td></tr>
            <tr><td></td><td></td><td></td><td></td><td></td><td></td><td></td><td></td><td></td><td></td></tr>
            <tr><td></td><td></td><td></td><td></td><td></td><td></td><td></td><td></td><td></td><td></td></tr>
          </tbody>
        </table>
      </div>
    </section>

    <aside class="rail">
      <div class="ri first"><svg class="ric"><use href="#r-gear"/></svg></div>
      <div class="ri"><svg class="ric"><use href="#r-cube"/></svg></div>
      <div class="ri"><svg class="ric"><use href="#r-ocube"/></svg></div>
      <div class="ri"><svg class="ric"><use href="#r-part"/></svg></div>
      <div class="ri on"><svg class="ric"><use href="#r-nav"/></svg></div>
      <div class="ri"><svg class="ric"><use href="#r-tbl"/></svg></div>
      <div class="ri"><svg class="ric"><use href="#r-mtl"/></svg></div>
      <div class="ri"><svg class="ric"><use href="#r-flow"/></svg></div>
      <div class="ri"><svg class="ric"><use href="#r-book"/></svg></div>
      <div class="ri"><svg class="ric"><use href="#r-oprt"/></svg></div>
      <div class="ri"><svg class="ric"><use href="#r-mea"/></svg></div>
      <div class="ri"><svg class="ric"><use href="#r-info"/></svg></div>
      <div class="ri"><svg class="ric"><use href="#r-web"/></svg></div>
      <div class="ri"><svg class="ric"><use href="#r-clk"/></svg></div>
      <div class="ri"><svg class="ric"><use href="#r-rbw"/></svg></div>
      <div class="ri"><svg class="ric"><use href="#r-wnd"/></svg></div>
      <div class="ri"><svg class="ric"><use href="#r-tls"/></svg></div>
      <div class="ri"><svg class="ric"><use href="#r-mta"/></svg></div>
    </aside>
  </main>

  <div class="statusbar"></div>

  <footer class="taskbar">
    <span class="tb start"><svg class="z16"><use href="#z-win"/></svg></span>
    <span class="tb app1 run"><svg class="z24"><use href="#z-web"/></svg></span>
    <span class="tb app2 run cur"><span class="nxlogo">NX</span></span>
    <span class="tb app3 run"><svg class="z20"><use href="#z-gear"/></svg></span>
    <div class="tray">
      <svg class="trc chev" viewBox="0 0 12 8"><path fill="none" stroke="#fff" stroke-width="1.200" d="M1 7l5-5 5 5"/></svg>
      <svg class="trc m10"><use href="#z-net"/></svg>
      <svg class="trc m8"><use href="#z-360"/></svg>
      <svg class="trc m3"><use href="#z-vol"/></svg>
      <span class="ime">英</span>
      <span class="badge14">14</span>
      <div class="clock"><span>9:02</span><span>2024/4/18</span></div>
      <i class="notif"></i>
    </div>
    <i class="showdesk"></i>
    <span class="watermark">UG爱好者论坛@aly384452101</span>
  </footer>

  <div class="dialog" role="dialog">
    <div class="dlghead">工序参数</div>
    <div class="dlgbody">
      <div class="dlgmsg">
        <svg class="errico" viewBox="0 0 30 30"><rect x="0.500" y="0.500" width="29" height="29" fill="#f0123a" stroke="#a01028"/><path stroke="#fff" stroke-width="2" d="M5 5l20 20M25 5L5 25"/></svg>
        <span>必须为工序启用 MfgCore_NcmClearanceGeomBody 功能开关才能继承安全距离体。</span>
      </div>
      <div class="dlgbtn"><span>确定(<u>O</u>)</span></div>
    </div>
  </div>
</div>
</body>
</html>
```

FILE: styles.css
```css
* { box-sizing: border-box; }
html, body { margin: 0; padding: 0; }
body { width: 1920px; height: 1080px; overflow: hidden; background: #fff; color: #222;
  font-family: "Noto Sans", "Noto Sans CJK SC", sans-serif; font-size: 12px; }
i { font-style: normal; display: block; flex: none; }
svg { display: block; flex: none; }
.sprite { position: absolute; }
.app { position: relative; width: 1920px; height: 1080px; display: flex; flex-direction: column; }

/* icon paint classes */
.gs { fill: none; stroke: #c6c6c6; stroke-width: 1.2; }
.gf { fill: #e2e2e2; stroke: #c6c6c6; }
.gw { fill: #fff; stroke: #c6c6c6; stroke-width: 1.2; }
.dw { stroke: #333; }
.qs { fill: none; stroke: #fff; }
.micro { font: 700 5px "Liberation Sans", sans-serif; fill: #333; }
.nano { font: 6px "Liberation Sans", sans-serif; fill: #333; }
.qm { font: 12px "Liberation Sans", sans-serif; fill: #fff; }

/* margin helpers */
.m2 { margin-left: 2px; } .m3 { margin-left: 3px; } .m4 { margin-left: 4px; } .m5 { margin-left: 5px; }
.m6 { margin-left: 6px; } .m7 { margin-left: 7px; } .m8 { margin-left: 8px; } .m9 { margin-left: 9px; }
.m10 { margin-left: 10px; } .m11 { margin-left: 11px; } .m12 { margin-left: 12px; } .m13 { margin-left: 13px; }
.m16 { margin-left: 16px; } .m17 { margin-left: 17px; }

.caret { width: 0; height: 0; border-left: 3px solid transparent; border-right: 3px solid transparent; border-top: 4px solid #222; }
.caret.light { border-top-color: #fff; }

/* title bar */
.titlebar { height: 28px; flex: none; display: flex; align-items: center; padding-bottom: 3px; background: #05739e; color: #fff; }
.quick { flex: 0 0 1066px; display: flex; align-items: center; padding-left: 4px; height: 25px; }
.nx { font: 700 23px/25px "Liberation Sans", sans-serif; width: 32px; color: #fff; }
.vsep { width: 1px; height: 20px; background: #034f6e; }
.q16 { width: 16px; height: 16px; }
.dim { opacity: .28; }
.qtext { font-size: 12px; color: #fff; }
.apptitle { font-size: 13px; }
.siemens { margin-left: auto; margin-top: 2px; font: 700 12.500px "Liberation Sans", sans-serif; letter-spacing: .6px; }
.winbtns { display: flex; align-items: center; margin-left: 26px; padding-right: 8px; }
.w-min { width: 8px; height: 2px; background: #fff; margin-top: 8px; }
.w-res { width: 12px; height: 12px; margin-left: 14px; }
.w-cls { width: 12px; height: 12px; margin-left: 12px; }

/* menu */
.menubar { height: 28px; flex: none; display: flex; align-items: stretch; background: #046a91; color: #fff; font-size: 13px; }
.mi { padding: 0 14.150px; line-height: 25px; white-space: nowrap; border-bottom: 2px solid transparent; }
.mi.first { margin-left: 6px; margin-right: 12px; }
.mi.on { color: #ffc53d; border-bottom-color: #fdc13a; padding: 0 14.500px; }
.menuright { margin-left: auto; display: flex; align-items: center; padding-right: 5px; }
.mfc { width: 18px; height: 18px; }
.search { width: 177px; height: 21px; margin-left: 9px; background: #fff; border: 1px solid #8a8a8a; display: flex; align-items: center; justify-content: space-between; padding: 0 2px 0 1px; }
.search span { font-size: 11.500px; color: #a6a6a6; line-height: 19px; }
.mag { width: 16px; height: 16px; }

/* ribbon */
.ribbon { height: 94px; flex: none; display: flex; padding-top: 5px; background: #fff; border-bottom: 1px solid #dcdcdc; position: relative; }
.group { height: 84px; flex: none; display: flex; flex-direction: column; border-right: 1px solid #ddd; }
.gw218 { width: 218px; } .gw54 { width: 54px; } .gw375 { width: 375px; } .gw304 { width: 304px; }
.gw215 { width: 215px; } .gw164 { width: 164px; } .gw186 { width: 186px; } .gw88 { width: 88px; }
.tools { height: 71px; display: flex; flex: none; }
.pl4 { padding-left: 4px; } .pl6 { padding-left: 6px; } .pl8 { padding-left: 8px; } .pl10 { padding-left: 10px; } .pl12 { padding-left: 12px; }
.glabel { height: 13px; margin-top: 1px; display: grid; grid-template-columns: 1fr 18px; align-items: center; color: #046a90; font-size: 12px; line-height: 13px; }
.glabel span { text-align: center; }
.glabel .caret { margin-left: 3px; }
.btn { display: flex; flex-direction: column; align-items: center; flex: none; }
.btn.hl { background: #f6f7fb; margin-top: -3px; padding-top: 3px; height: 74px; }
.w26 { width: 26px; } .w40 { width: 40px; } .w47 { width: 47px; } .w48 { width: 48px; } .w49 { width: 49px; }
.w51 { width: 51px; } .w52 { width: 52px; } .w53 { width: 53px; } .w54 { width: 54px; } .w57 { width: 57px; }
.w58 { width: 58px; } .w59 { width: 59px; } .w62 { width: 62px; } .w64 { width: 64px; } .w88 { width: 88px; }
.ml3 { margin-left: 3px; } .ml12 { margin-left: 12px; }
.ico { width: 32px; height: 32px; }
.ico24 { width: 24px; height: 24px; }
.ico18 { width: 18px; height: 18px; }
.mt7 { margin-top: 7px; } .mt11 { margin-top: 11px; }
.lb { font-size: 11px; line-height: 16px; margin-top: 4px; white-space: nowrap; color: #222; }
.lb.off { color: #c9c9c9; }
.c-b { margin-top: 5px; }
.smallcol { display: flex; flex-direction: column; align-items: center; padding-top: 4px; }
.togcol { width: 35px; padding-left: 4px; display: flex; flex-direction: column; align-items: center; }
.tog { width: 31px; height: 32px; background: #c9e3e9; }
.carcol { width: 15px; padding-top: 49px; display: flex; justify-content: center; }
.arrows { width: 28px; margin-left: 10px; display: flex; flex-direction: column; align-items: center; gap: 4px; }
.player { display: grid; grid-template-columns: repeat(4, 24px); grid-template-rows: 24px 24px; row-gap: 11px; padding-top: 4px; justify-items: center; align-items: center; }
.cir { width: 24px; height: 24px; }
.speed { width: 96px; display: flex; flex-direction: column; align-items: center; }
.track { width: 96px; height: 16px; margin-top: 8px; display: flex; background: linear-gradient(#999, #999) center / 100% 4px no-repeat; }
.thumb { width: 8px; height: 16px; background: #046a90; margin-left: 39px; }
.speed .lb { margin-top: 4px; }
.ribcaret { position: absolute; right: 6px; top: 81px; }

/* selection bar */
.selbar { height: 28px; flex: none; display: flex; align-items: center; padding-left: 13px; border-bottom: 1px solid #aaa; background: #fff; }
.hamb { width: 10px; height: 10px; }
.menu-m { margin-left: 6px; font-size: 12px; }
.tsep { width: 1px; height: 20px; background: #ddd; }
.combo { height: 21px; border: 1px solid #888; display: flex; align-items: center; justify-content: space-between; padding: 0 4px 0 3px; font-size: 12px; flex: none; }
.cb { border-left-width: 4px; border-right-width: 4px; border-top-width: 5px; }
.c149 { width: 149px; } .c156 { width: 156px; }
.ti { width: 16px; height: 16px; } .ti17 { width: 17px; height: 17px; } .ti18 { width: 18px; height: 18px; } .ti22 { width: 22px; height: 22px; }
.tg { width: 23px; height: 22px; background: #c9e3e9; display: block; flex: none; }
.endcaret { margin-left: auto; margin-right: 6px; margin-top: 8px; }

/* workspace */
.workspace { height: 840px; flex: none; display: flex; border-bottom: 1px solid #aaa; }
.leftpane { width: 932px; flex: none; display: flex; flex-direction: column; }
.tabs { height: 27px; flex: none; display: flex; border-bottom: 2px solid #046a90; }
.tab { height: 25px; display: flex; align-items: center; padding-left: 6px; white-space: nowrap; font-size: 12.500px; }
.tab.active { width: 154px; background: #046a90; color: #fff; }
.tab.active .tabname { letter-spacing: -.2px; }
.tabico { width: 16px; height: 16px; }
.tab:not(.active) .tabico { filter: invert(.8); }
.tabname { margin-left: 4px; }
.tablock { width: 11px; height: 13px; margin-left: 6px; }
.tabx { width: 8px; height: 8px; margin-left: 6px; }
.viewport { flex: 1; background: #24262b; border-left: 1px solid #bbb; min-height: 0; }
.scene { width: 931px; height: 812px; }
.edge { stroke: #3a2a10; stroke-width: .6; }
.ax { font: 14px "Liberation Sans", sans-serif; }
.ay { fill: #2c8c2c; } .az { fill: #1030e0; } .ar { fill: #c82a3a; }
.tx { font: 13px "Liberation Sans", sans-serif; }
.tr { fill: #d84a20; } .tg2 { fill: #2c8c2c; }

/* navigator */
.nav { width: 951px; flex: none; border-left: 2px solid #b5b5b5; display: flex; flex-direction: column; background: #fff; }
.navtitle { height: 24px; flex: none; display: flex; align-items: center; padding: 0 6px 0 11px; font-size: 12px; }
.navico { width: 15px; height: 15px; }
.navtitle span { margin-left: 4px; }
.maxbox { margin-left: auto; width: 12px; height: 11px; border: 1.500px solid #111; border-top-width: 3px; }
.navtools { height: 32px; margin-top: 7px; flex: none; display: flex; align-items: center; padding-left: 16px; }
.ni { width: 25px; height: 32px; }
.ni32 { width: 32px; height: 32px; }
.ni-on { width: 32px; height: 32px; background: #c9e3e9; display: flex; justify-content: center; flex: none; }
.tablewrap { width: 923px; height: 763px; margin: 3px 0 0 13px; border: 1px solid #ddd; overflow: hidden; flex: none; }
.optable { width: 921px; table-layout: fixed; border-collapse: collapse; font-size: 12px; color: #333; }
.c1 { width: 135px; } .c2 { width: 49px; } .c3 { width: 77px; } .c4 { width: 84px; } .c5 { width: 76px; }
.c6 { width: 79px; } .c7 { width: 93px; } .c8 { width: 85px; } .c9 { width: 94px; } .c10 { width: 149px; }
.optable th { height: 21px; background: #f0f0f0; border-right: 1px solid #dcdcdc; border-bottom: 1px solid #cfcfcf; text-align: left; font-weight: 400; padding: 0 6px; }
.optable th:first-child { padding-left: 6px; }
.optable td { height: 20px; padding: 0 6px 0 5px; border-right: 1px solid #ececec; border-bottom: 1px solid #ececec; white-space: nowrap; line-height: 18px; }
.optable tbody tr:nth-child(even) td { background: #fafafa; }
.optable tr.sel td { background: #c9e3e9; }
.optable tr.sel td.nosel { background: #fff; }
.optable tr.sel td.tc { background: linear-gradient(90deg, #fff 89px, #c9e3e9 89px); }
.optable td.tc { position: relative; padding: 0; }
.nm { position: absolute; left: 57px; top: -1px; line-height: 19px; }
.nm.g { left: 22px; }
.nm.hi { left: 92px; }
.xp { position: absolute; top: 5px; width: 9px; height: 9px; background: #f6f6f6; border: 1px solid #d8d8d8; font: 9px/7px "Liberation Sans", sans-serif; text-align: center; color: #222; z-index: 1; }
.xp.lv0 { left: 5px; }
.xp.lv1 { left: 24px; }
.vline { position: absolute; left: 28px; top: -1px; height: 21px; border-left: 1px dotted #999; }
.vline.half { height: 10px; }
.dash { position: absolute; left: 34px; top: 9px; width: 5px; border-top: 1px dotted #999; }
.lv0 + .dash { left: 15px; }
.dash2 { position: absolute; left: 29px; top: 9px; width: 9px; border-top: 1px dotted #999; }
.dash3 { position: absolute; left: 29px; top: 9px; width: 28px; border-top: 1px dotted #999; }
.ti-folder { position: absolute; left: 38px; top: 2px; width: 16px; height: 16px; }
.ti-mcs { position: absolute; left: 40px; top: 1px; width: 16px; height: 17px; }
.ti-no { position: absolute; left: 58px; top: 3px; width: 14px; height: 14px; }
.ti-hand { position: absolute; left: 73px; top: 2px; width: 16px; height: 16px; }
.xmark { width: 14px; height: 14px; }

/* rail */
.rail { width: 37px; flex: none; background: #dcdcdc; border-left: 1px solid #aaa; display: flex; flex-direction: column; }
.ri { height: 44px; flex: none; display: flex; align-items: center; justify-content: center; }
.ri.first { height: 33px; padding-bottom: 3px; }
.ri.on { margin-left: -1px; width: 35px; background: #fff; border: 1px solid #aaa; border-left: 0; }
.ric { width: 24px; height: 24px; }

.statusbar { height: 22px; flex: none; background: #fff; }

/* taskbar */
.taskbar { height: 40px; flex: none; position: relative; display: flex; background: linear-gradient(90deg, #223b46, #1d3047 60%, #1c2a46); color: #fff; }
.tb { height: 40px; display: flex; align-items: center; justify-content: center; border-bottom: 2px solid transparent; flex: none; }
.start { width: 48px; }
.app1 { width: 40px; margin-left: 7px; }
.app2 { width: 48px; margin-left: 5px; background: #4f6067; }
.app3 { width: 40px; margin-left: 5px; }
.run { border-bottom-color: #76b9ed; }
.z16 { width: 16px; height: 16px; } .z24 { width: 24px; height: 24px; } .z20 { width: 20px; height: 20px; }
.nxlogo { width: 21px; height: 21px; background: #8f1210; color: #eee; font: 700 10px/21px "Liberation Mono", monospace; text-align: center; box-shadow: -3px 3px 0 #0c8c8c; }
.tray { margin-left: auto; display: flex; align-items: center; height: 40px; padding-right: 25px; position: relative; }
.trc { width: 16px; height: 16px; }
.chev { width: 12px; height: 8px; }
.ime { margin-left: 14px; font-size: 13px; }
.badge14 { width: 22px; height: 22px; margin-left: 9px; border: 2px solid #12c060; border-radius: 50%; font: 12px/18px "Liberation Sans", sans-serif; text-align: center; border-bottom-color: #0d8a50; }
.clock { width: 80px; margin-left: 1px; display: flex; flex-direction: column; align-items: center; font-size: 12px; line-height: 19px; }
.notif { width: 15px; height: 14px; margin-left: 10px; border: 1px solid #fff; }
.showdesk { position: absolute; right: 4px; top: 0; width: 1px; height: 40px; background: #4a5a70; }
.watermark { position: absolute; left: 1718px; top: 17px; font: 15.500px/22px "Liberation Serif", "Noto Sans CJK SC", serif; color: #a9a9a9; letter-spacing: .2px; white-space: nowrap; }

/* dialog */
.dialog { position: absolute; left: 688px; top: 463px; width: 545px; height: 115px; display: flex; flex-direction: column; border: 1px solid #a0a0a0; border-top: 0; background: #efefef; }
.dlghead { height: 28px; flex: none; margin: 0 -1px; padding-left: 9px; background: #006088; color: #fff; font-size: 12px; line-height: 30px; }
.dlgbody { flex: 1; display: flex; flex-direction: column; }
.dlgmsg { display: flex; align-items: center; padding: 11px 0 0 14px; }
.errico { width: 30px; height: 30px; }
.dlgmsg span { margin-left: 16px; margin-top: -2px; font-size: 12.200px; white-space: nowrap; color: #222; }
.dlgbtn { width: 63px; height: 25px; margin: 8px 0 0 240px; padding: 2px; background: #006088; color: #fff; text-align: center; }
.dlgbtn span { display: block; border: 1px dotted #000; line-height: 19px; font-size: 12px; }
```
